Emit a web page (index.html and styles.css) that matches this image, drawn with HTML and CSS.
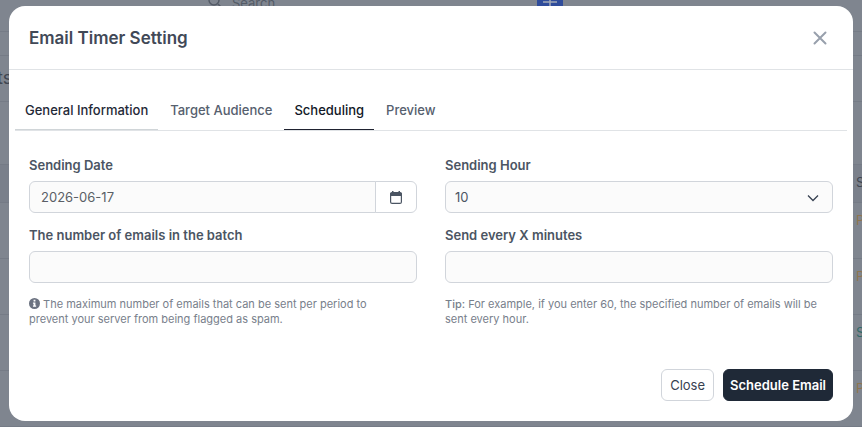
FILE: index.html
```html
<!DOCTYPE html>
<html lang="en">
<head>
<meta charset="utf-8">
<title>Email Timer Setting</title>
<meta name="viewport" content="width=device-width, initial-scale=1">
<link rel="stylesheet" href="styles.css">
</head>
<body>
<div class="page" aria-hidden="true">
  <div class="topbar">
    <span class="search"><svg width="14" height="14" viewBox="0 0 14 14"><circle cx="6" cy="6" r="5"/><path d="M10 10l4 4"/></svg>Search</span>
    <span class="add"><svg width="14" height="14" viewBox="0 0 14 14"><path d="M7 0v14M0 7h14"/></svg></span>
  </div>
  <div class="subbar"></div>
  <div class="heading">ts</div>
  <div class="tools"></div>
  <div class="row row-head">S</div>
  <div class="row pending">P</div>
  <div class="row pending">P</div>
  <div class="row sent">S</div>
  <div class="row pending">P</div>
</div>
<div class="overlay">
  <section class="modal" role="dialog" aria-modal="true" aria-labelledby="title">
    <header class="modal-header">
      <h1 id="title">Email Timer Setting</h1>
      <button class="dismiss" type="button" aria-label="Close dialog"><svg width="14" height="14" viewBox="0 0 14 14"><path d="M1.5 1.5l11 11M12.500 1.500l-11 11"/></svg></button>
    </header>
    <nav class="tabs">
      <a class="tab hovered" href="#general">General Information</a>
      <a class="tab" href="#audience">Target Audience</a>
      <a class="tab active" href="#scheduling" aria-current="page">Scheduling</a>
      <a class="tab" href="#preview">Preview</a>
    </nav>
    <form class="form">
      <div class="fields">
        <div class="field">
          <label for="date">Sending Date</label>
          <div class="input-group">
            <input class="control" id="date" type="text" value="2026-06-17">
            <button class="picker" type="button" aria-label="Choose date"><svg width="12" height="13" viewBox="0 0 12 13"><rect x=".6" y="1.600" width="10.800" height="10.800" rx="1.500"/><path class="solid" d="M0 5V3a1.500 1.500 0 0 1 1.500-1.500H2V0h1.500v1.500h5V0H10v1.500h.5A1.500 1.500 0 0 1 12 3v2z"/></svg></button>
          </div>
        </div>
        <div class="field">
          <label for="hour">Sending Hour</label>
          <div class="select-wrap">
            <select class="control" id="hour"><option>10</option></select>
            <svg class="chevron" width="12" height="8" viewBox="0 0 12 8"><path d="M1 1.500l5 5 5-5"/></svg>
          </div>
        </div>
        <div class="field">
          <label for="batch">The number of emails in the batch</label>
          <input class="control" id="batch" type="text" aria-describedby="batch-help">
          <p class="help" id="batch-help"><svg class="info" width="11" height="11" viewBox="0 0 12 12"><circle cx="6" cy="6" r="6"/><path d="M5 2h2v1.800H5zM4.300 5H7v3.300h.8v1.200H4.300V8.300H5V6.200h-.7z"/></svg> The maximum number of emails that can be sent per period to prevent your server from being flagged as spam.</p>
        </div>
        <div class="field">
          <label for="every">Send every X minutes</label>
          <input class="control" id="every" type="text" aria-describedby="every-help">
          <p class="help" id="every-help"><b>Tip:</b> For example, if you enter 60, the specified number of emails will be sent every hour.</p>
        </div>
      </div>
      <footer class="actions">
        <button class="btn" type="button">Close</button>
        <button class="btn primary" type="submit">Schedule Email</button>
      </footer>
    </form>
  </section>
</div>
</body>
</html>
```
FILE: styles.css
```css
* { box-sizing: border-box; }
body {
  margin: 0;
  height: 100vh;
  overflow: hidden;
  position: relative;
  background: #7f858f;
  color: #4b5563;
  font: 13px/20px Inter, "Liberation Sans", sans-serif;
}
svg { fill: none; stroke: currentColor; }

/* Dimmed page behind the dialog */
.page { color: #3f4651; }
.topbar, .subbar, .heading, .row, .tools { border-bottom: 1px solid #757b86; }
.topbar {
  display: flex;
  height: 32px;
  padding-left: 208px;
  padding-right: 299px;
  justify-content: space-between;
  align-items: flex-start;
}
.search { display: flex; gap: 10px; line-height: 6px; color: #545b66; }
.search svg { margin-top: -6px; stroke-width: 1.5; }
.add { width: 26px; height: 14px; background: #2f4c9b; color: #a3a9b8; text-align: center; line-height: 0; }
.add svg { margin-top: -5px; stroke-width: 1.5; }
.subbar { height: 24px; }
.heading { height: 46px; font-size: 18px; line-height: 44px; margin-left: -3px; }
.tools { height: 63px; }
.row { height: 56px; padding-left: 856px; line-height: 35px; }
.row-head { height: 38px; background: #7a808b; }
.pending { color: #8f7550; }
.sent { color: #2f6a68; }

/* Dialog */
.overlay { position: absolute; inset: 0; padding: 6px 9px 7px; display: flex; align-items: flex-start; }
.modal { flex: 1; background: #fff; border-radius: 16px; }
.modal-header {
  display: flex;
  justify-content: space-between;
  align-items: center;
  height: 64px;
  padding: 0 20px;
  border-bottom: 1px solid #e0e3e6;
}
h1 { margin: 0; font-size: 17px; line-height: 24px; font-weight: 600; color: #414957; }
.dismiss { border: 0; background: none; padding: 6px; color: #98a0ac; display: flex; }
.dismiss svg { stroke-width: 2; stroke-linecap: round; }

.tabs { display: flex; gap: 2px; margin: 20px 6px 0; border-bottom: 1px solid #e0e3e6; }
.tab {
  padding: 10px 10px 9px;
  border-bottom: 1px solid transparent;
  font-weight: 500;
  color: #56606e;
  text-decoration: none;
}
.hovered { color: #1f2937; border-color: #d0d5d8; }
.active { color: #111827; border-color: #1f2230; }

.form { padding: 24px 20px 20px; }
.fields { display: grid; grid-template-columns: 1fr 1fr; gap: 12px 28px; }
label { display: block; margin-bottom: 6px; font-weight: 600; }
.control {
  display: block;
  width: 100%;
  height: 32px;
  padding: 0 11px;
  border: 1px solid #d1d5db;
  border-radius: 6px;
  background: #fbfbfb;
  color: #5a5f66;
  font: inherit;
}
.input-group { display: flex; }
.input-group .control { flex: 1; min-width: 0; border-radius: 6px 0 0 6px; }
.picker {
  width: 42px;
  margin-left: -1px;
  padding: 0;
  border: 1px solid #d1d5db;
  border-radius: 0 6px 6px 0;
  background: #fff;
  color: #4b5563;
  display: flex;
  align-items: center;
  justify-content: center;
}
.picker svg { stroke-width: 1.2; }
.picker .solid { fill: currentColor; stroke: none; }
.select-wrap { position: relative; }
.select-wrap .control { appearance: none; padding: 0 9px; color: #4b5563; }
.chevron { position: absolute; right: 14px; top: 13px; stroke: #374151; stroke-width: 1.3; pointer-events: none; }
.help { margin: 14px 0 0; padding-right: 12px; font-size: 11px; line-height: 15px; color: #78808b; }
.help b { font-weight: 500; }
.info { vertical-align: -1px; stroke: none; fill: #6b7280; }
.info path { fill: #fff; }

.actions { display: flex; justify-content: flex-end; gap: 9px; margin-top: 42px; }
.btn {
  height: 32px;
  padding: 0 8px;
  border: 1px solid #d1d5db;
  border-radius: 6px;
  background: #fff;
  color: #374151;
  font: inherit;
}
.primary { padding: 0 6px; border-color: #1f2937; background: #1f2937; color: #fff; font-weight: 600; }
```
